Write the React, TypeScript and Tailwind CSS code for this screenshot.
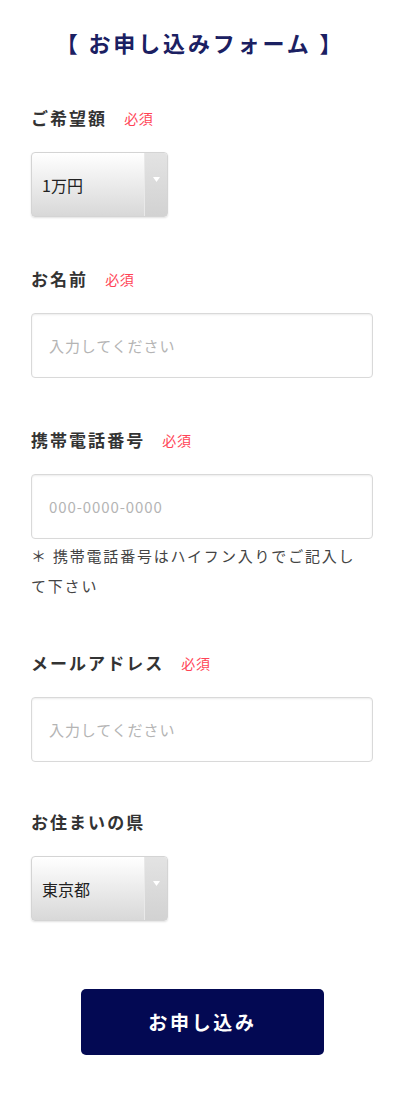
import React from "react";

const font = { fontFamily: '"Noto Sans CJK JP", "Noto Sans", sans-serif' };

function Label({ text, required }: { text: string; required?: boolean }) {
  return (
    <div className="flex items-center h-[24px] mb-[22px]">
      <span className="text-[17px] font-bold text-[#333333] tracking-[0.12em] leading-[24px]">{text}</span>
      {required && (
        <span className="ml-[17px] text-[14px] text-[#ff4456] leading-[24px] tracking-[0.05em]">必須</span>
      )}
    </div>
  );
}

function FakeSelect({ value }: { value: string }) {
  return (
    <div className="flex w-[137px] h-[65px] rounded-[4px] border border-[#d4d4d4] overflow-hidden shadow-[0_1px_2px_rgba(0,0,0,0.12)] bg-gradient-to-b from-[#ffffff] to-[#d8d8d8]">
      <div className="flex-1 flex items-center pl-[10px] text-[16px] text-[#222222]">{value}</div>
      <div className="w-[23px] border-l border-[#e9e9e9] bg-gradient-to-b from-[#e3e3e3] to-[#d2d2d2] flex justify-center pt-[24px]">
        <svg width="7" height="5" viewBox="0 0 7 5">
          <path d="M0 0 L7 0 L3.5 5 Z" fill="#ffffff" />
        </svg>
      </div>
    </div>
  );
}

function TextInput({ placeholder }: { placeholder: string }) {
  return (
    <input
      type="text"
      placeholder={placeholder}
      className="w-[342px] h-[65px] rounded-[4px] border border-[#d9d9d9] bg-white pl-[17px] text-[15px] tracking-[0.06em] text-[#333] placeholder:text-[#b4b4b4] shadow-[inset_0_1px_2px_rgba(0,0,0,0.08)] outline-none"
      style={font}
    />
  );
}

export default function App() {
  return (
    <div className="w-[400px] min-h-[1102px] bg-white" style={font}>
      <div className="pt-[27px] h-[57px] text-center">
        <h1 className="text-[22px] font-bold leading-[30px] text-[#1b2062] tracking-[0.13em]">【 お申し込みフォーム 】</h1>
      </div>
      <div className="pl-[31px] pr-[27px]">
        <div className="mt-[49px]">
          <Label text="ご希望額" required />
          <FakeSelect value="1万円" />
        </div>
        <div className="mt-[50px]">
          <Label text="お名前" required />
          <TextInput placeholder="入力してください" />
        </div>
        <div className="mt-[50px]">
          <Label text="携帯電話番号" required />
          <TextInput placeholder="000-0000-0000" />
          <p className="mt-[2px] text-[15px] leading-[30px] text-[#444444] tracking-[0.12em]">
            ＊ 携帯電話番号はハイフン入りでご記入し<br />て下さい
          </p>
        </div>
        <div className="mt-[50px]">
          <Label text="メールアドレス" required />
          <TextInput placeholder="入力してください" />
        </div>
        <div className="mt-[48px]">
          <Label text="お住まいの県" />
          <FakeSelect value="東京都" />
        </div>
      </div>
      <div className="mt-[68px] flex justify-center pl-[5px] pb-[46px]">
        <button className="w-[243px] h-[66px] rounded-[5px] bg-[#030953] text-white text-[19px] font-bold tracking-[0.14em]" style={font}>
          お申し込み
        </button>
      </div>
    </div>
  );
}
